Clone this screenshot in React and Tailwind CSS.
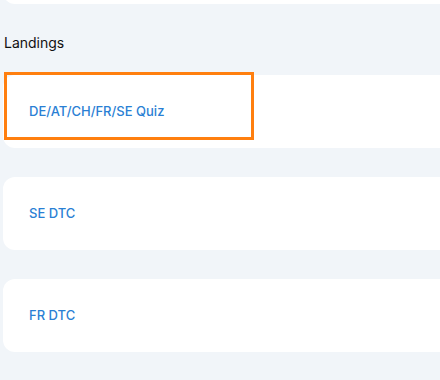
export default function App() {
  const items = ["DE/AT/CH/FR/SE Quiz", "SE DTC", "FR DTC"];
  return (
    <div className="w-[440px] h-[380px] overflow-hidden bg-[#f1f5f9]" style={{ fontFamily: "Inter, 'Noto Sans', sans-serif" }}>
      <div className="ml-[3px] -mr-[20px] mt-[-20px] h-[24px] rounded-xl bg-white" />
      <div className="mt-[29px] ml-[4px] text-[14px] leading-[20px] text-[#111111]">Landings</div>
      <div className="mt-[22px] ml-[3px] -mr-[20px] flex flex-col gap-[29px]">
        {items.map((t, i) => (
          <div key={t} className="relative h-[73px] rounded-xl bg-white flex items-center pl-[26px]">
            <span className="text-[13px] font-medium text-[#2a7fd4] leading-[16px] -mt-[2px]">{t}</span>
            {i === 0 && (
              <div className="absolute left-[1px] top-[-3px] w-[250px] h-[68px] border-[3px] border-[#ff7f0f]" />
            )}
          </div>
        ))}
      </div>
    </div>
  );
}
